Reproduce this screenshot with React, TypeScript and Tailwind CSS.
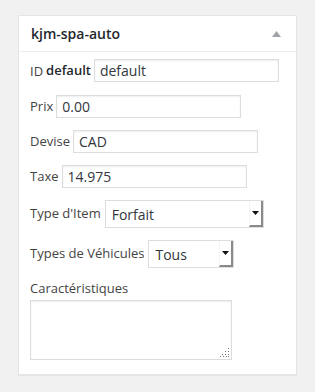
import React, { useState } from 'react';

const font = { fontFamily: '"Open Sans", "Noto Sans", sans-serif' };

const Select = ({ value, options, width }: { value: string; options: string[]; width: string }) => {
    const [v, setV] = useState(value);
    return (
        <div className={`relative h-[28px] ${width} border border-[#ddd] bg-white`}>
            <select
                value={v}
                onChange={(e) => setV(e.target.value)}
                className="h-full w-full appearance-none bg-transparent pl-[6px] text-[14px] text-[#32373c] outline-none"
            >
                {options.map((o) => (
                    <option key={o}>{o}</option>
                ))}
            </select>
            <span className="pointer-events-none absolute right-0 top-0 flex h-full w-[14px] items-center justify-center border-r-2 border-b-2 border-l border-[#8a8a8a] border-l-[#f4f4f4] bg-white">
                <svg width="7" height="4" viewBox="0 0 7 4">
                    <path d="M0 0h7L3.5 4z" fill="#111" />
                </svg>
            </span>
        </div>
    );
};

const App = () => {
    const [id, setId] = useState('default');
    const [prix, setPrix] = useState('0.00');
    const [devise, setDevise] = useState('CAD');
    const [taxe, setTaxe] = useState('14.975');
    const [carac, setCarac] = useState('');

    const inputCls = 'h-[23px] w-[185px] border border-[#ddd] bg-white px-[5px] text-[14px] text-[#32373c] shadow-[inset_0_1px_2px_rgba(0,0,0,0.07)] outline-none';

    return (
        <div className="min-h-[392px] bg-[#f1f1f1] pl-[18px] pt-[15px]" style={font}>
            <div className="w-[279px] border border-[#e5e5e5] bg-white shadow-[0_1px_1px_rgba(0,0,0,0.04)]">
                <div className="flex h-[36px] items-center justify-between border-b border-[#eee] pl-[12px] pr-[15px]">
                    <h2 className="text-[14px] font-semibold text-[#23282d]">kjm-spa-auto</h2>
                    <svg width="9" height="6" viewBox="0 0 9 6">
                        <path d="M0 6L4.5 0L9 6z" fill="#a0a5aa" />
                    </svg>
                </div>
                <div className="px-[11px] pb-[14px] text-[13px] text-[#444]">
                    <div className="mt-[7px] flex items-center gap-[3px]">
                        <span className="pt-[3px]">ID</span>
                        <b className="font-semibold text-[#23282d]">default</b>
                        <input className={inputCls} value={id} onChange={(e) => setId(e.target.value)} />
                    </div>
                    <div className="mt-[13px] flex items-center gap-[3px]">
                        <span>Prix</span>
                        <input className={inputCls} value={prix} onChange={(e) => setPrix(e.target.value)} />
                    </div>
                    <div className="mt-[12px] flex items-center gap-[3px]">
                        <span>Devise</span>
                        <input className={inputCls} value={devise} onChange={(e) => setDevise(e.target.value)} />
                    </div>
                    <div className="mt-[12px] flex items-center gap-[3px]">
                        <span>Taxe</span>
                        <input className={inputCls} value={taxe} onChange={(e) => setTaxe(e.target.value)} />
                    </div>
                    <div className="mt-[12px] flex items-center gap-[4px]">
                        <span>Type d'Item</span>
                        <Select value="Forfait" options={['Forfait', 'Option']} width="w-[159px]" />
                    </div>
                    <div className="mt-[12px] flex items-center gap-[4px]">
                        <span>Types de Véhicules</span>
                        <Select value="Tous" options={['Tous', 'Auto', 'Camion']} width="w-[86px]" />
                    </div>
                    <div className="mt-[11px] leading-[18px]">Caractéristiques</div>
                    <div className="relative mt-[3px] h-[60px] w-[202px]">
                        <textarea
                            className="block h-full w-full resize-none border border-[#ddd] bg-white p-[4px] text-[14px] outline-none shadow-[inset_0_1px_2px_rgba(0,0,0,0.07)]"
                            value={carac}
                            onChange={(e) => setCarac(e.target.value)}
                        />
                        <svg className="pointer-events-none absolute bottom-[2px] right-[2px]" width="10" height="10" viewBox="0 0 10 10">
                            <g fill="#777">
                                <rect x="8" y="0" width="1" height="1" />
                                <rect x="5" y="3" width="1" height="1" />
                                <rect x="8" y="3" width="1" height="1" />
                                <rect x="2" y="6" width="1" height="1" />
                                <rect x="5" y="6" width="1" height="1" />
                                <rect x="8" y="6" width="1" height="1" />
                                <rect x="0" y="8" width="1" height="1" />
                                <rect x="3" y="8" width="1" height="1" />
                                <rect x="6" y="8" width="1" height="1" />
                                <rect x="8" y="8" width="1" height="1" />
                            </g>
                        </svg>
                    </div>
                </div>
            </div>
        </div>
    );
};

export default App;
